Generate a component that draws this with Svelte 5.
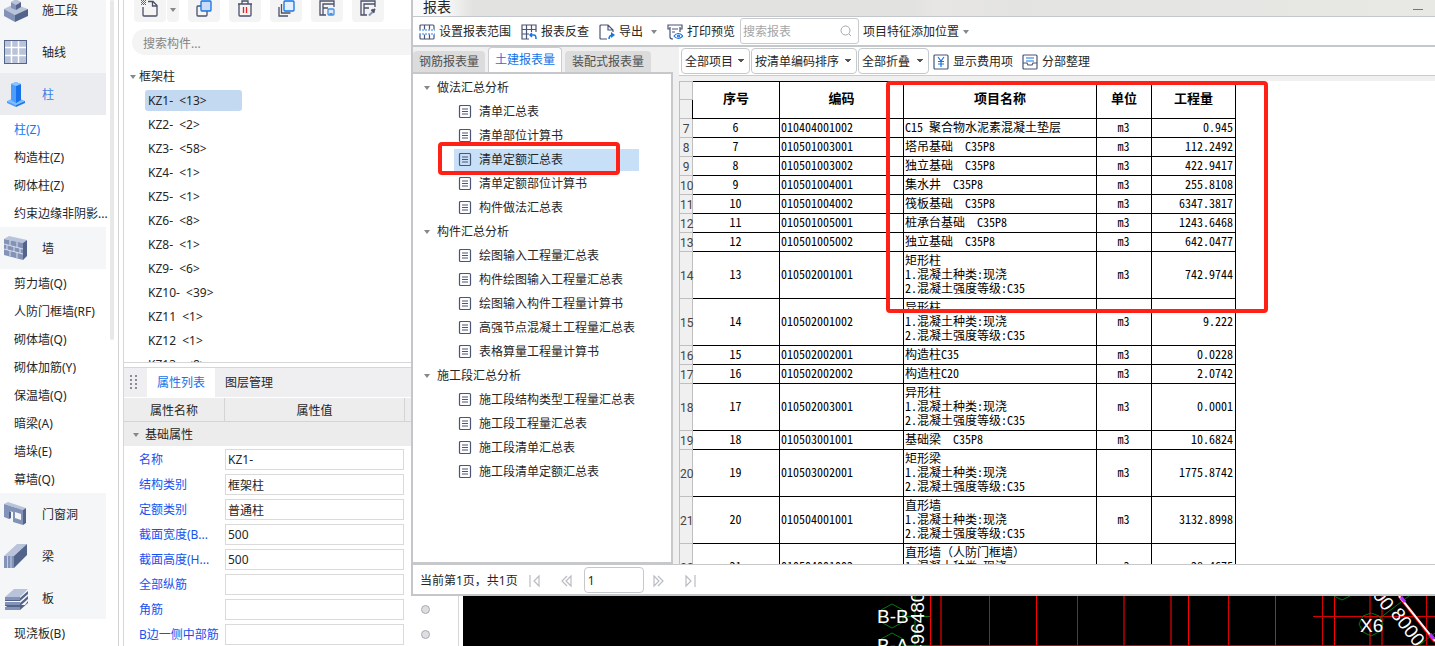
<script>
  const navigation = [
    { label: '施工段', icon: 'stage', items: [] },
    { label: '轴线', icon: 'axis', items: [] },
    { label: '柱', icon: 'column', active: true, items: ['柱(Z)', '构造柱(Z)', '砌体柱(Z)', '约束边缘非阴影...'] },
    { label: '墙', icon: 'wall', items: ['剪力墙(Q)', '人防门框墙(RF)', '砌体墙(Q)', '砌体加筋(Y)', '保温墙(Q)', '暗梁(A)', '墙垛(E)', '幕墙(Q)'] },
    { label: '门窗洞', icon: 'opening', items: [] },
    { label: '梁', icon: 'beam', items: [] },
    { label: '板', icon: 'slab', items: ['现浇板(B)'] }
  ];

  const tools = ['copy', 'delete', 'layers', 'save', 'pick'];
  const toolNames = { copy: '复制', delete: '删除', layers: '层间复制', save: '存档', pick: '提取' };

  const members = [
    'KZ1-  <13>', 'KZ2-  <2>', 'KZ3-  <58>', 'KZ4-  <1>', 'KZ5-  <1>', 'KZ6-  <8>',
    'KZ8-  <1>', 'KZ9-  <6>', 'KZ10-  <39>', 'KZ11  <1>', 'KZ12  <1>', 'KZ13-  <8>'
  ];

  const properties = [
    ['名称', 'KZ1-'],
    ['结构类别', '框架柱'],
    ['定额类别', '普通柱'],
    ['截面宽度(B...', '500'],
    ['截面高度(H...', '500'],
    ['全部纵筋', ''],
    ['角筋', ''],
    ['B边一侧中部筋', '']
  ];

  const reports = [
    { title: '做法汇总分析', items: ['清单汇总表', '清单部位计算书', '清单定额汇总表', '清单定额部位计算书', '构件做法汇总表'] },
    { title: '构件汇总分析', items: ['绘图输入工程量汇总表', '构件绘图输入工程量汇总表', '绘图输入构件工程量计算书', '高强节点混凝土工程量汇总表', '表格算量工程量计算书'] },
    { title: '施工段汇总分析', items: ['施工段结构类型工程量汇总表', '施工段工程量汇总表', '施工段清单汇总表', '施工段清单定额汇总表'] }
  ];
  const currentReport = '清单定额汇总表';

  const spec = '\n1.混凝土种类:现浇\n2.混凝土强度等级:C35';
  const rows = [
    [7, 6, '010404001002', 'C15 聚合物水泥素混凝土垫层', '0.945'],
    [8, 7, '010501003001', '塔吊基础  C35P8', '112.2492'],
    [9, 8, '010501003002', '独立基础  C35P8', '422.9417'],
    [10, 9, '010501004001', '集水井  C35P8', '255.8108'],
    [11, 10, '010501004002', '筏板基础  C35P8', '6347.3817'],
    [12, 11, '010501005001', '桩承台基础  C35P8', '1243.6468'],
    [13, 12, '010501005002', '独立基础  C35P8', '642.0477'],
    [14, 13, '010502001001', '矩形柱' + spec, '742.9744'],
    [15, 14, '010502001002', '异形柱' + spec, '9.222'],
    [16, 15, '010502002001', '构造柱C35', '0.0228'],
    [17, 16, '010502002002', '构造柱C20', '2.0742'],
    [18, 17, '010502003001', '异形柱' + spec, '0.0001'],
    [19, 18, '010503001001', '基础梁  C35P8', '10.6824'],
    [20, 19, '010503002001', '矩形梁' + spec, '1775.8742'],
    [21, 20, '010504001001', '直形墙' + spec, '3132.8998'],
    [22, 21, '010504001002', '直形墙（人防门框墙）' + spec, '28.4675']
  ];

  const brightLines = [930, 1036, 1188, 1275, 1334];
  const midLines = [989, 1077, 1228, 1322, 1426];
  const darkLines = [941, 1124, 1171, 1370, 1382];
</script>

{#snippet navIcon(name)}
  <svg class="nav-icon" width="28" height="28" viewBox="0 0 28 28" aria-hidden="true">
    {#if name === 'stage'}
      <path d="M4 13 14 8l14 5-13 6z" fill="#b9c3d9" /><path d="M4 13l11 6v7L4 20z" fill="#8393b8" /><path d="M15 19l13-6v7l-13 6z" fill="#53648a" />
      <path d="M11 6l5-3 5 3-5 3z" fill="#b9c3d9" /><path d="M11 6l5 3v5l-5-2z" fill="#8393b8" /><path d="M16 9l5-3v5l-5 3z" fill="#53648a" />
    {:else if name === 'axis'}
      <path d="M4 2h23v24H4z" fill="#53648a" /><path d="M5 3h21v22H5z" fill="#b9c3d9" />
      <path d="M11.500 3v22M18.500 3v22M5 9.500h21M5 17.500h21" stroke="#fff" stroke-width="1.500" />
    {:else if name === 'column'}
      <path d="M7 21l9-4 9 4-9 4z" fill="#7dbbff" /><path d="M7 21l9 4v2l-9-4z" fill="#4d9dfa" /><path d="M16 25l9-4v2l-9 4z" fill="#1f78e8" />
      <path d="M11 4l5-2 5 2v16l-5 3-5-3z" fill="#4d9dfa" /><path d="M16 6l5-2v16l-5 3z" fill="#1671ea" /><path d="M11 4l5-2 5 2-5 2z" fill="#8cc4ff" />
    {:else if name === 'wall'}
      <path d="M4 5l5-3 18 4-4 3z" fill="#b9c3d9" /><path d="M4 5l19 4v17L4 21z" fill="#8393b8" /><path d="M23 9l4-3v16l-4 4z" fill="#53648a" />
      <path d="M4 10l19 5M4 15l19 5M10 6v5M17 8v5M7 11v5M14 13v5M20 14v5M10 17v5M17 18v6" stroke="#d9deea" stroke-width="1" fill="none" />
    {:else if name === 'opening'}
      <path d="M4 4l4-2 18 6-3 2z" fill="#b9c3d9" /><path d="M4 4l19 6v15l-10-3V12L9 11v8l-5-2zM15 12v6l6 2v-6z" fill="#8393b8" fill-rule="evenodd" /><path d="M23 10l3-2v15l-3 2zM9 11l2 1v6l-2 1z" fill="#53648a" />
    {:else if name === 'beam'}
      <path d="M4 14L17 2h10L14 14z" fill="#b9c3d9" /><path d="M14 14L27 2v11L14 26z" fill="#53648a" /><path d="M4 14h10v12H4z" fill="#8393b8" /><path d="M7.500 14v12M11 14v12" stroke="#c5cde0" />
    {:else}
      <path d="M5 24l3-3h17l3-4v2l-8 7H5zM5 19h15l8-7v3l-8 7H5zM5 14h15l8-7v3l-8 7H5z" fill="#53648a" /><path d="M5 13L14 5h14l-8 8z" fill="#b9c3d9" /><path d="M5 13h15v3H5zM5 18h15v3H5zM5 23h15v3H5z" fill="#8393b8" />
    {/if}
  </svg>
{/snippet}

{#snippet toolIcon(name)}
  <svg width="18" height="18" viewBox="0 0 18 18" fill="none" stroke="#4a5068" stroke-width="1.300" aria-hidden="true">
    {#if name === 'new'}
      <path d="M7 2.500h5l4 4V16q0 1-1 1H3q-1 0-1-1V8M11.500 3v4H16" />
      <path d="M0 1h1v1H0zM2 1h1v1H2zM4 1h1v1H4zM1 2h1v1H1zM3 2h1v1H3zM0 3h1v1H0zM2 3h1v1H2zM4 3h1v1H4zM1 4h1v1H1zM3 4h1v1H3zM0 5h1v1H0zM2 5h1v1H2zM4 5h1v1H4z" fill="#1473e6" stroke="none" />
    {:else if name === 'copy'}
      <rect x="2" y="7" width="10" height="10" rx="1" /><rect x="6" y="2" width="10" height="10" rx="1" fill="#c8dcf7" stroke="#1473e6" />
    {:else if name === 'delete'}
      <path d="M3 5v11q0 1 1 1h10q1 0 1-1V5M2 5h14M6 5V2h6v3" /><path d="M7.500 8v6M10.500 8v6" stroke="#ee1c25" />
    {:else if name === 'layers'}
      <path d="M4.500 5v9h9M2 8v9h9" /><rect x="7" y="2" width="10" height="10" rx="1" fill="#e2f0ff" stroke="#1473e6" />
    {:else}
      <path d="M8 16H2V2h14v6M5 16V5h11M5 9h5" />
      {#if name === 'save'}
        <rect x="10" y="10" width="6" height="6" rx="1" fill="#d9e9fb" stroke="#4a8fe0" /><path d="M11.500 14h3v2h-3z" fill="#4a8fe0" stroke="none" />
      {:else}
        <path d="M10 16.500l4-4" stroke="#8a97b0" stroke-width="2" /><path d="M12.500 10.500l3 3M14 12l2-2" stroke="#4a5068" stroke-width="2" />
      {/if}
    {/if}
  </svg>
{/snippet}

{#snippet reportIcon(name)}
  <svg width="16" height="16" viewBox="0 0 16 16" fill="none" stroke="#4a5577" stroke-width="1.200" aria-hidden="true">
    {#if name === 'range'}
      <path d="M1 5.500V2q0-1 1-1h12q1 0 1 1v3.500M1 10.500V14q0 1 1 1h12q1 0 1-1v-3.500M5.500 1v4.500M10.500 1v4.500M5.500 10.500V15M10.500 10.500V15" />
      <path d="M0 6h16M0 10h16" stroke="#2b80ea" stroke-dasharray="2 1" />
    {:else if name === 'trace'}
      <path d="M8 15H1V1h14v7M1 5.500h14M1 10h7M5.500 1v14M10.500 1v7" /><path d="M9 11h4q2 0 2 4M11 9l-2 2 2 2" stroke="#1473e6" stroke-width="1.500" />
    {:else if name === 'export'}
      <path d="M8 15H2q-1 0-1-1V2q0-1 1-1h7l5 5v2M9 1v5h5" /><path d="M10 15q0-4 4-4" stroke="#1473e6" stroke-width="1.500" /><path d="M12 8l4 3-4 3z" fill="#1473e6" stroke="none" />
    {:else if name === 'preview'}
      <path d="M3 5H1V1h14v4h-2M3 3v10q0 2 3 2M13 3v5M5 5h6M5 8h3" /><path d="M7 12q4-5 9 0-5 5-9 0z" stroke="#1473e6" /><circle cx="11.500" cy="12" r="1" stroke="#1473e6" />
    {:else if name === 'fee'}
      <rect x="1" y="1" width="14" height="14" rx="1" /><path d="M5 3l3 4 3-4M8 7v6M5 7.500h6M5 10h6" stroke="#1473e6" />
    {:else if name === 'arrange'}
      <path d="M1 9V2q0-1 1-1h12q1 0 1 1v7M1 9h4l1 2h4l1-2h4v5q0 1-1 1H2q-1 0-1-1z" /><path d="M4 4h8M4 7h8" stroke="#1473e6" />
    {:else if name === 'sheet'}
      <rect x="2.500" y="1.500" width="11" height="12" rx="1" /><path d="M5 5h6M5 7.500h6M5 10h6" />
    {:else if name === 'first'}
      <path d="M3 2v12M12 3L7 8l5 5z" stroke="#b9bcc2" />
    {:else if name === 'previous'}
      <path d="M9 3L4 8l5 5M13 3L8 8l5 5z" stroke="#b9bcc2" />
    {:else if name === 'next'}
      <path d="M7 3l5 5-5 5M3 3l5 5-5 5z" stroke="#b9bcc2" />
    {:else if name === 'last'}
      <path d="M13 2v12M4 3l5 5-5 5z" stroke="#b9bcc2" />
    {/if}
  </svg>
{/snippet}

<div class="app">
  <nav class="sidebar">
    <div class="nav-list">
      {#each navigation as group}
        <button class="group" class:active={group.active}>{@render navIcon(group.icon)}<span>{group.label}</span></button>
        {#each group.items as item, i}
          <button class="entry" class:chosen={group.active && i === 0}>{item}</button>
        {/each}
      {/each}
    </div>
    <div class="scroll-thumb"></div>
  </nav>

  <aside class="members">
    <section class="member-list">
      <div class="tools">
        <div class="split">
          <button class="tool" aria-label="新建">{@render toolIcon('new')}</button>
          <button class="more" aria-label="更多新建"><i class="caret"></i></button>
        </div>
        {#each tools as tool}
          <button class="tool" aria-label={toolNames[tool]}>{@render toolIcon(tool)}</button>
        {/each}
      </div>
      <input class="member-search" type="search" placeholder="搜索构件..." aria-label="搜索构件" />
      <div class="member-root"><i class="caret"></i>框架柱</div>
      <ul>
        {#each members as member, i}
          <li><button class:selected={i === 0}>{member}</button></li>
        {/each}
      </ul>
    </section>

    <section class="properties">
      <div class="property-tabs">
        <svg width="8" height="15" viewBox="0 0 8 15" fill="#888d96" aria-hidden="true">
          {#each [0, 4, 8, 12] as y}<path d="M0 {y}h2v2H0zM5 {y}h2v2H5z" />{/each}
        </svg>
        <button class="current">属性列表</button><button>图层管理</button>
      </div>
      <div class="property-head"><span>属性名称</span><span>属性值</span><span></span></div>
      <div class="property-group"><i class="caret"></i>基础属性</div>
      {#each properties as [name, value], i}
        <div class="property">
          <label for="property-{i}">{name}</label>
          <input id="property-{i}" type="text" {value} />
          <i class="dot"></i>
        </div>
      {/each}
    </section>
  </aside>

  <main class="drawing">
    <svg viewBox="463 596 972 50" preserveAspectRatio="xMinYMin meet" fill="none" aria-label="轴网">
      {#each darkLines as x}<path d="M{x} 596v50" stroke="#8b0000" stroke-width="2" />{/each}
      {#each midLines as x}<path d="M{x}.500 596v50" stroke="#d80000" />{/each}
      {#each brightLines as x}<path d="M{x}.500 596v50" stroke="#ff0000" />{/each}
      <path d="M930 645.500h505M1313 616.500h122" stroke="#d80000" />
      <g stroke="#007a10">
        <path d="M892 604l11 6v12l-11 6-11-6v-12zM892 633l11 6v12h-22v-12zM904 616.500h26M904 645.500h26M915 596v50" />
        <path d="M1371 613l8 3 4 8-4 8-8 4-8-4-4-8 4-8zM1334 596l8 4 8-4M1380 618l29-22M1418 646l17-13" />
      </g>
      <path d="M1399 596l36 46" stroke="#ff0000" stroke-width="3" />
      <path d="M1399 596l36 45" stroke="#ffffff" stroke-width="2" />
      <path d="M1401 597l4 5M1430 634l4 5" stroke="#b030ff" stroke-width="3" />
      <g class="marks">
        <text x="877" y="623">B-B</text>
        <text x="877" y="652">B-A</text>
        <text transform="translate(924 655) rotate(-90)">496480</text>
        <text x="1360" y="632">X6</text>
        <text transform="translate(1372 595) rotate(53)">00</text>
        <text transform="translate(1390 614) rotate(53)">8000</text>
      </g>
    </svg>
  </main>

  <div class="dialog" role="dialog" aria-label="报表">
    <header><span>报表</span><button aria-label="最小化"></button></header>

    <div class="report-tools">
      <button>{@render reportIcon('range')}设置报表范围</button>
      <button>{@render reportIcon('trace')}报表反查</button>
      <button>{@render reportIcon('export')}导出<i class="caret"></i></button>
      <button>{@render reportIcon('preview')}打印预览</button>
      <label class="report-search">
        <input type="text" placeholder="搜索报表" aria-label="搜索报表" />
        <svg width="12" height="12" viewBox="0 0 12 12" fill="none" stroke="#a5a8ad" aria-hidden="true"><circle cx="5.500" cy="5.500" r="4.500" /><path d="M9 9l2 2" /></svg>
      </label>
      <button class="position">项目特征添加位置<i class="caret"></i></button>
    </div>

    <div class="body">
      <div class="catalog">
        <div class="catalog-tabs">
          <button>钢筋报表量</button><button class="current">土建报表量</button><button>装配式报表量</button>
        </div>
        <div class="catalog-tree">
          {#each reports as group}
            <div class="catalog-title"><i class="caret"></i>{group.title}</div>
            {#each group.items as item}
              <button class="report" class:selected={item === currentReport}>
                {@render reportIcon('sheet')}{item}
                {#if item === currentReport}<span class="highlight"></span>{/if}
              </button>
            {/each}
          {/each}
        </div>
      </div>

      <div class="result">
        <div class="filters">
          <select aria-label="项目" class="project"><option>全部项目</option></select>
          <select aria-label="排序" class="order"><option>按清单编码排序</option></select>
          <select aria-label="折叠" class="fold"><option>全部折叠</option></select>
          <button>{@render reportIcon('fee')}显示费用项</button>
          <button>{@render reportIcon('arrange')}分部整理</button>
        </div>
        <div class="sheet">
          <table>
            <colgroup><col class="c-line" /><col class="c-index" /><col class="c-code" /><col class="c-name" /><col class="c-unit" /><col class="c-amount" /></colgroup>
            <thead>
              <tr class="head-top"><td class="line"></td><th rowspan="2">序号</th><th rowspan="2">编码</th><th rowspan="2">项目名称</th><th rowspan="2">单位</th><th rowspan="2">工程量</th></tr>
              <tr class="head-bottom"><td class="line"></td></tr>
            </thead>
            <tbody>
              {#each rows as [line, index, code, name, amount]}
                <tr>
                  <td class="line">{line}</td>
                  <td class="center">{index}</td>
                  <td>{code}</td>
                  <td>{name}</td>
                  <td class="center">m3</td>
                  <td class="amount">{amount}</td>
                </tr>
              {/each}
            </tbody>
          </table>
          <span class="highlight"></span>
        </div>
      </div>
    </div>

    <footer>
      <span>当前第1页，共1页</span>
      <button aria-label="首页">{@render reportIcon('first')}</button>
      <button aria-label="上一页">{@render reportIcon('previous')}</button>
      <input type="text" value="1" aria-label="页码" />
      <button aria-label="下一页">{@render reportIcon('next')}</button>
      <button aria-label="末页">{@render reportIcon('last')}</button>
    </footer>
  </div>
</div>

<style>
  .app {
    position: relative;
    display: flex;
    height: 100vh;
    overflow: hidden;
    background: #fff;
    color: #262626;
    font: 12px/16px "Noto Sans", "Noto Sans CJK SC", sans-serif;
  }
  .app :is(button, input, select) {
    box-sizing: border-box;
    margin: 0;
    padding: 2px 0 0;
    border: 0;
    background: none;
    color: inherit;
    font: inherit;
    text-align: left;
    white-space: nowrap;
  }
  .app svg { flex: none; }
  .caret {
    flex: none;
    width: 0;
    height: 0;
    border: 3px solid transparent;
    border-top: 4px solid #85888d;
    border-bottom: 0;
  }

  .sidebar {
    box-sizing: border-box;
    flex: none;
    display: flex;
    gap: 4px;
    width: 119px;
    border-right: 1px solid #d2d2d4;
  }
  .nav-list { width: 106px; margin-top: -11px; }
  .nav-icon { margin-bottom: 2px; }
  .sidebar .group {
    display: flex;
    align-items: center;
    gap: 14px;
    width: 100%;
    height: 42px;
    background: #f5f6f8;
  }
  .sidebar .group.active { background: #ebecf0; color: #3e7fe0; }
  .sidebar .entry {
    display: block;
    width: 100%;
    height: 28px;
    padding-left: 14px;
  }
  .sidebar .chosen { color: #0a7cf2; }
  .scroll-thumb { width: 4px; height: 340px; border-radius: 2px; background: #e8e8e8; }

  .members {
    box-sizing: border-box;
    flex: none;
    display: flex;
    flex-direction: column;
    gap: 4px;
    width: 336px;
    margin: 0 4px;
    border: solid #d6d6d8;
    border-width: 0 1px;
  }
  .member-list { flex: none; height: 362px; overflow: hidden; border-bottom: 1px solid #d6d6d8; }
  .tools { display: flex; gap: 9px; margin: -6px 0 7px 10px; }
  .split { display: flex; gap: 1px; }
  .members .tool, .members .more {
    display: grid;
    place-items: center;
    width: 32px;
    height: 28px;
    padding: 0;
    border-radius: 4px;
    background: #f4f4f5;
  }
  .members .more { width: 12px; padding-top: 4px; }
  .members .member-search {
    width: 318px;
    height: 26px;
    margin-left: 8px;
    padding-left: 11px;
    border-radius: 13px 0 0 13px;
    background: #f4f4f4;
  }
  .app ::placeholder { color: #858585; opacity: 1; }
  .member-root { display: flex; align-items: center; gap: 3px; height: 24px; margin-top: 10px; padding-left: 6px; }
  .members ul { margin: -1px 0 0; padding: 0 0 0 21px; list-style: none; }
  .members li { display: flex; align-items: center; height: 24px; }
  .members li button { width: 97px; height: 21px; padding-left: 3px; border-radius: 3px; white-space: pre; }
  .members li .selected { background: #c2d9f1; }

  .properties { flex: none; border-top: 1px solid #d6d6d8; }
  .property-tabs { display: flex; align-items: center; height: 29px; padding-left: 6px; background: #efeff2; border-bottom: 1px solid #fff; }
  .property-tabs svg { margin-right: 9px; }
  .property-tabs button { height: 29px; padding: 0 10px; }
  .property-tabs .current { background: #fff; color: #1473e6; }
  .property-head, .property { display: grid; grid-template-columns: 100px 180px 1fr; align-items: center; }
  .property-head { height: 23px; background: #ededed; border-bottom: 1px solid #d4d4d4; }
  .property-head span { height: 23px; line-height: 25px; text-align: center; }
  .property-head span + span { border-left: 1px solid #d4d4d4; }
  .property-group { box-sizing: border-box; display: flex; align-items: center; gap: 6px; height: 24px; padding: 1px 0 0 9px; margin-bottom: 1px; background: #ececec; }
  .property { height: 25px; }
  .property label { padding: 1px 0 0 15px; color: #1552f0; white-space: nowrap; }
  .members .property input { width: 179px; height: 21px; margin-left: 1px; padding: 0 0 0 2px; border: 1px solid #dadada; }
  .dot { width: 7px; height: 7px; margin-left: 17px; border: 1px solid #a9abae; border-radius: 50%; background: #dcdee1; }

  .drawing { flex: 1; min-width: 0; display: flex; align-items: flex-end; background: #000; }
  .drawing svg { width: 100%; height: 50px; }
  .marks { fill: #fff; font: 19px "Liberation Sans", sans-serif; }

  .dialog {
    position: absolute;
    inset: 0 0 50px 411px;
    display: flex;
    flex-direction: column;
    border: solid #c4c6ca;
    border-width: 0 0 2px 2px;
    background: #f0f0f0;
  }
  .dialog header {
    flex: none;
    display: flex;
    align-items: center;
    justify-content: space-between;
    height: 16px;
    padding: 0 12px 0 10px;
    border-bottom: 1px solid #c4c8cc;
    background: linear-gradient(90deg, #fafafa, #fafafa 30px, #e2e2e1 60px, #e2e2e1 500px, #e8e6e4 520px, #e3e3e2 600px, #e8e8e4);
    font-size: 14px;
    line-height: 14px;
  }
  .dialog header span { padding-bottom: 2px; }
  .dialog header button { width: 10px; height: 1px; padding: 0; background: #777; margin-top: 3px; }
  .report-tools, .filters, .dialog footer { display: flex; align-items: center; background: #fff; }
  .report-tools { flex: none; height: 28px; padding-left: 6px; border-bottom: 2px solid #c5c8cb; }
  .dialog button { display: flex; align-items: center; gap: 4px; }
  .report-tools button { margin-right: 10px; }
  .report-tools .caret { margin-left: 4px; }
  .report-search { display: flex; align-items: center; box-sizing: border-box; width: 119px; height: 26px; margin: 0 4px 0 -5px; padding: 0 6px 0 2px; border: 1px solid #c9cbce; border-radius: 3px; }
  .report-search input { flex: 1; min-width: 0; }
  .report-search ::placeholder { color: #a5a5a5; }
  .report-tools .position .caret { margin-left: 0; }

  .body { flex: 1; display: flex; gap: 6px; min-height: 0; }
  .catalog { flex: none; display: flex; flex-direction: column; width: 260px; }
  .catalog-tabs { display: flex; align-items: flex-end; gap: 3px; height: 25px; }
  .catalog-tabs button { height: 21px; padding: 0 6px; border-radius: 4px 4px 0 0; background: #dcdcdc; color: #505050; }
  .catalog-tabs button + button + button { padding: 0 7px; }
  .catalog-tabs .current { height: 25px; padding: 0 6px; border: 1px solid #c9ccd0; border-bottom: 0; background: #fff; color: #1473e6; }
  .catalog-tree { flex: 1; border: solid #c6c8ca; border-width: 2px 2px 2px 0; background: #fff; padding-top: 2px; }
  .catalog-title { display: flex; align-items: center; gap: 7px; height: 24px; padding-left: 11px; }
  .dialog .report { position: relative; gap: 6px; width: 185px; height: 24px; margin-left: 41px; padding: 0 0 0 3px; }
  .dialog .report.selected { height: 22px; margin-top: 1px; margin-bottom: 1px; background: #c8dff8; }
  .highlight { position: absolute; box-sizing: border-box; border: 4px solid #ff2115; border-radius: 4px; pointer-events: none; }
  .report .highlight { inset: -7px 19px -4px -16px; }

  .result { flex: 1; min-width: 0; display: flex; flex-direction: column; }
  .filters { flex: none; height: 28px; border-bottom: 1px solid #c9cbce; padding-left: 2px; margin-bottom: 5px; gap: 1px; }
  .dialog .filters select {
    appearance: none;
    height: 26px;
    padding: 1px 0 0 3px;
    border: 1px solid #c6c9cc;
    border-radius: 4px;
    background: conic-gradient(from -37deg at 50% 100%, #555 74deg, transparent 0) right 5px center / 6px 4px no-repeat;
  }
  .dialog .filters .project { width: 69px; }
  .dialog .filters .order { width: 106px; }
  .dialog .filters .fold { width: 71px; }
  .filters button { margin-left: 3px; margin-right: 5px; }

  .sheet { position: relative; flex: 1; min-height: 0; overflow: hidden; background: #fff; }
  table {
    table-layout: fixed;
    width: 556px;
    border-collapse: collapse;
    color: #000;
    font: 12px/14px "Noto Sans Mono CJK SC", "Noto Sans CJK SC", monospace;
  }
  .c-line { width: 13px; }
  .c-index { width: 87px; }
  .c-code { width: 124px; }
  .c-name { width: 193px; }
  .c-unit { width: 55px; }
  .c-amount { width: 84px; }
  td, th { padding: 1px 2px 3px 1px; border: 1px solid #000; white-space: pre; }
  th { padding: 0 0 4px; font-size: 13px; }
  .head-top { height: 18px; }
  .head-bottom { height: 19px; }
  td.line { padding: 2px 0 0; border-color: #bfbfbf; background: #f0f0f0; color: #444; font: 12px/14px Roboto, sans-serif; text-align: center; }
  .center { text-align: center; }
  .amount { text-align: right; }
  .sheet .highlight { left: 207px; top: 0; width: 382px; height: 232px; }

  .dialog footer { flex: none; height: 29px; padding-left: 7px; border-top: 1px solid #c6c8ca; gap: 15px; }
  .dialog footer span { margin-right: -6px; padding-top: 2px; }
  .dialog footer input { width: 60px; height: 26px; margin: 0 -8px 0 -5px; padding-left: 3px; border: 1px solid #c6c9cc; border-radius: 4px; }
</style>
